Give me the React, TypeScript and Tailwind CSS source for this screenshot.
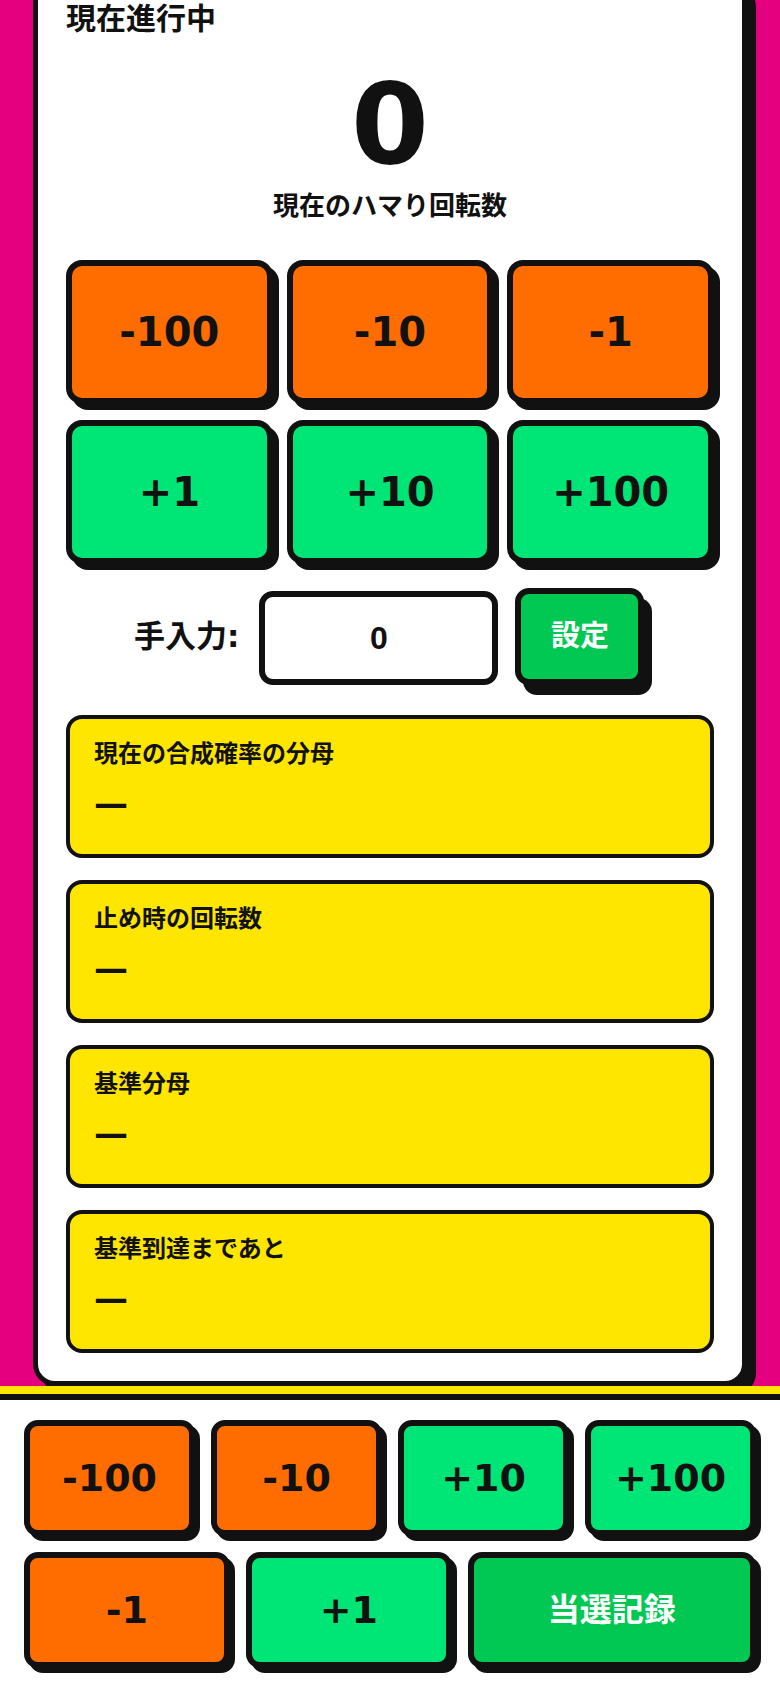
import React from "react";

type Tone = "minus" | "plus" | "record";

const toneClass: Record<Tone, string> = {
    minus: "bg-[#ff6d00] text-[#111]",
    plus: "bg-[#00e676] text-[#111]",
    record: "bg-[#00c853] text-white",
};

const BigKey = ({ label, tone }: { label: string; tone: Tone }) => (
    <button
        className={`flex h-[144px] items-center justify-center rounded-[16px] border-[6px] border-[#111] text-[40px] font-bold shadow-[6px_6px_0_#111] ${toneClass[tone]}`}
    >
        {label}
    </button>
);

const BarKey = ({ label, tone }: { label: string; tone: Tone }) => (
    <button
        className={`flex h-[116px] items-center justify-center rounded-[14px] border-[6px] border-[#111] font-bold shadow-[5px_5px_0_#111] ${
            tone === "record" ? "text-[32px]" : "text-[38px]"
        } ${toneClass[tone]}`}
    >
        {label}
    </button>
);

const StatBox = ({ label }: { label: string }) => (
    <div className="h-[143px] rounded-[16px] border-4 border-[#111] bg-[#ffe600] px-[24px] pt-[20px]">
        <div className="text-[24px] leading-[30px] font-bold">{label}</div>
        <div className="mt-[14px] text-[34px] leading-[40px] font-bold">—</div>
    </div>
);

export default function App() {
    const stats = ["現在の合成確率の分母", "止め時の回転数", "基準分母", "基準到達まであと"];

    return (
        <div className="flex h-[1688px] w-[780px] flex-col overflow-hidden bg-white font-['DejaVu_Sans','Noto_Sans_CJK_JP',sans-serif] text-[#111]">
            <main className="flex-1 overflow-hidden bg-[#e4007f] pl-[33px]">
                <section className="-mt-[24px] w-[714px] rounded-[22px] border-[5px] border-[#111] bg-white px-[28px] pt-[20px] pb-[28px] shadow-[9px_9px_0_#111]">
                    <h2 className="text-[30px] leading-[36px] font-bold">現在進行中</h2>
                    <div className="mt-[31px] text-center text-[112px] leading-none font-bold">0</div>
                    <p className="mt-[10px] text-center text-[26px] leading-[32px] font-bold">現在のハマり回転数</p>

                    <div className="mt-[38px] grid grid-cols-3 gap-x-[14px] gap-y-[16px]">
                        <BigKey label="-100" tone="minus" />
                        <BigKey label="-10" tone="minus" />
                        <BigKey label="-1" tone="minus" />
                        <BigKey label="+1" tone="plus" />
                        <BigKey label="+10" tone="plus" />
                        <BigKey label="+100" tone="plus" />
                    </div>

                    <div className="mt-[24px] flex h-[97px] items-center pl-[68px]">
                        <span className="text-[31px] font-bold">手入力:</span>
                        <input
                            defaultValue="0"
                            className="ml-[20px] h-[94px] w-[239px] self-end rounded-[14px] border-[6px] border-[#111] bg-white text-center font-['Liberation_Sans',sans-serif] text-[32px] font-bold outline-none"
                        />
                        <button className="ml-[17px] h-[97px] w-[129px] rounded-[14px] border-[6px] border-[#111] bg-[#00c853] text-[29px] font-bold text-white shadow-[8px_10px_0_#111]">
                            設定
                        </button>
                    </div>

                    <div className="mt-[30px] flex flex-col gap-[22px]">
                        {stats.map((s) => (
                            <StatBox key={s} label={s} />
                        ))}
                    </div>
                </section>
            </main>

            <div className="h-2 bg-[#ffe600]" />
            <footer className="border-t-[6px] border-[#111] bg-white px-6 py-5">
                <div className="grid grid-cols-4 gap-4">
                    <BarKey label="-100" tone="minus" />
                    <BarKey label="-10" tone="minus" />
                    <BarKey label="+10" tone="plus" />
                    <BarKey label="+100" tone="plus" />
                </div>
                <div className="mt-4 grid grid-cols-[1fr_1fr_1.4fr] gap-4">
                    <BarKey label="-1" tone="minus" />
                    <BarKey label="+1" tone="plus" />
                    <BarKey label="当選記録" tone="record" />
                </div>
            </footer>
        </div>
    );
}
